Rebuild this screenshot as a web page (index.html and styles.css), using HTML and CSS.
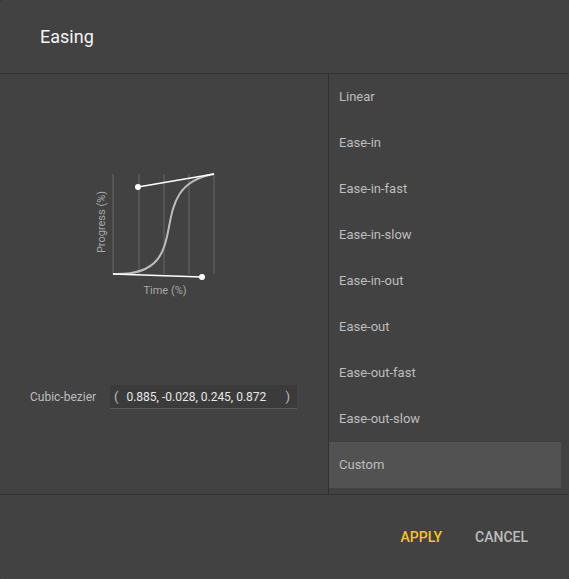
FILE: index.html
```html
<!DOCTYPE html>
<html>
<head>
<meta charset="utf-8">
<link rel="stylesheet" href="styles.css">
</head>
<body>
<div class="dialog">
  <div class="header"><h1 class="title">Easing</h1></div>
  <div class="body">
    <div class="left">
      <svg class="graph" width="140" height="135" viewBox="0 0 140 135">
        <g stroke="#555" stroke-width="2">
          <line x1="23" y1="9" x2="23" y2="109"/>
          <line x1="49" y1="9" x2="49" y2="109"/>
          <line x1="74" y1="9" x2="74" y2="109"/>
          <line x1="99" y1="9" x2="99" y2="109"/>
          <line x1="124" y1="9" x2="124" y2="109"/>
        </g>
        <path d="M23 109 C112 112, 48 22, 124 9" fill="none" stroke="#bdbdbd" stroke-width="2"/>
        <g stroke="#fff" stroke-width="1.3">
          <line x1="23" y1="109" x2="112" y2="112"/>
          <line x1="124" y1="9" x2="48" y2="22"/>
        </g>
        <circle cx="112" cy="112" r="3" fill="#fff"/>
        <circle cx="48" cy="22" r="3" fill="#fff"/>
        <text class="axis" x="0" y="0" transform="translate(15 57) rotate(-90)" text-anchor="middle">Progress (%)</text>
        <text class="axis" x="75" y="129" text-anchor="middle">Time (%)</text>
      </svg>
      <div class="bezier">
        <span class="blabel">Cubic-bezier</span>
        <div class="input"><span>(</span><span class="vals">0.885, -0.028, 0.245, 0.872</span><span>)</span></div>
      </div>
    </div>
    <ul class="list">
      <li>Linear</li>
      <li>Ease-in</li>
      <li>Ease-in-fast</li>
      <li>Ease-in-slow</li>
      <li>Ease-in-out</li>
      <li>Ease-out</li>
      <li>Ease-out-fast</li>
      <li>Ease-out-slow</li>
      <li class="active">Custom</li>
    </ul>
  </div>
  <div class="footer">
    <button class="btn apply">Apply</button>
    <button class="btn cancel">Cancel</button>
  </div>
</div>
</body>
</html>
```
FILE: styles.css
```css
html, body {
  margin: 0;
  padding: 0;
  background: #333;
}
.dialog {
  width: 569px;
  height: 579px;
  background: #424242;
  border-radius: 2px;
  display: flex;
  flex-direction: column;
  font-family: Roboto, "Liberation Sans", sans-serif;
  overflow: hidden;
}
.header {
  height: 73px;
  border-bottom: 1px solid #313131;
  display: flex;
  align-items: center;
  padding-left: 40px;
}
.title {
  margin: 0;
  font-size: 18px;
  font-weight: 400;
  color: #f5f5f5;
}
.body {
  height: 420px;
  display: flex;
}
.left {
  width: 328px;
  border-right: 1px solid #313131;
  display: flex;
  flex-direction: column;
}
.graph {
  display: block;
  margin: 91px 0 0 90px;
}
.axis {
  font-size: 11px;
  fill: #a8a8a8;
  font-family: Roboto, "Liberation Sans", sans-serif;
}
.bezier {
  display: flex;
  align-items: center;
  margin-top: 85px;
  padding-left: 30px;
}
.blabel {
  font-size: 12px;
  color: #bdbdbd;
  width: 80px;
}
.input {
  width: 179px;
  height: 23px;
  background: #3b3b3b;
  border-bottom: 1px solid #595959;
  display: flex;
  align-items: center;
  padding-left: 4px;
  padding-right: 4px;
  font-size: 12px;
  color: #e8e8e8;
}
.input span:first-child {
  color: #bdbdbd;
  font-size: 13px;
}
.input span:last-child {
  color: #bdbdbd;
  font-size: 13px;
  margin-left: auto;
  padding-right: 3px;
}
.vals {
  margin-left: 8px;
}
.list {
  list-style: none;
  margin: 0;
  padding: 0;
  width: 232px;
}
.list li {
  height: 46px;
  line-height: 46px;
  padding-left: 10px;
  font-size: 13px;
  color: #bdbdbd;
}
.list li.active {
  background: #525252;
}
.footer {
  flex: 1;
  border-top: 1px solid #313131;
  display: flex;
  justify-content: flex-end;
  align-items: center;
  padding-right: 25px;
  gap: 1px;
}
.btn {
  background: none;
  border: none;
  font-family: Roboto, "Liberation Sans", sans-serif;
  font-size: 14px;
  font-weight: 500;
  text-transform: uppercase;
  letter-spacing: 0;
  padding: 8px 16px;
  cursor: pointer;
}
.apply {
  color: #fbc12d;
}
.cancel {
  color: #bdbdbd;
}
```
